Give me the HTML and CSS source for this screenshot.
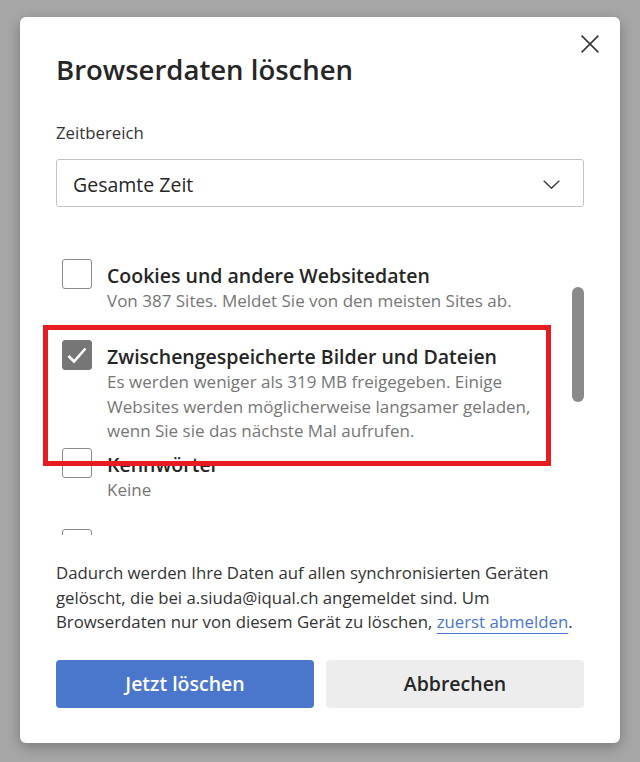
FILE: index.html
```html
<!DOCTYPE html>
<html lang="de">
<head>
<meta charset="utf-8">
<title>Browserdaten löschen</title>
<link rel="stylesheet" href="styles.css">
</head>
<body>
<div class="dialog">
  <div class="header">
    <h1 class="title">Browserdaten löschen</h1>
    <button class="close" aria-label="Schließen">
      <svg width="18" height="18" viewBox="0 0 18 18"><path d="M0.6 0.6 L17.4 17.4 M17.4 0.6 L0.6 17.4" stroke="#333" stroke-width="1.5" fill="none"/></svg>
    </button>
  </div>

  <div class="field-label">Zeitbereich</div>
  <div class="select">
    <span class="select-value">Gesamte Zeit</span>
    <svg class="chevron" width="17" height="9" viewBox="0 0 17 9"><path d="M0.7 0.7 L8.5 8.2 L16.3 0.7" stroke="#333" stroke-width="1.3" fill="none"/></svg>
  </div>

  <div class="scroll-area">
    <div class="list">
      <div class="item">
        <span class="checkbox"></span>
        <div class="item-text">
          <div class="item-title">Cookies und andere Websitedaten</div>
          <div class="item-desc">Von 387 Sites. Meldet Sie von den meisten Sites ab.</div>
        </div>
      </div>
      <div class="item item-tall">
        <span class="checkbox checked">
          <svg width="30" height="30" viewBox="0 0 30 30"><path d="M6.5 16 L12 21.5 L23.5 8.5" stroke="#fff" stroke-width="2.6" fill="none"/></svg>
        </span>
        <div class="item-text">
          <div class="item-title">Zwischengespeicherte Bilder und Dateien</div>
          <div class="item-desc">Es werden weniger als 319 MB freigegeben. Einige<br>Websites werden möglicherweise langsamer geladen,<br>wenn Sie sie das nächste Mal aufrufen.</div>
        </div>
      </div>
      <div class="item">
        <span class="checkbox"></span>
        <div class="item-text">
          <div class="item-title">Kennwörter</div>
          <div class="item-desc">Keine</div>
        </div>
      </div>
      <div class="item">
        <span class="checkbox"></span>
      </div>
    </div>
    <div class="track"><div class="thumb"></div></div>
    <div class="highlight"></div>
  </div>

  <p class="note">Dadurch werden Ihre Daten auf allen synchronisierten Geräten<br>gelöscht, die bei a.siuda@iqual.ch angemeldet sind. Um<br>Browserdaten nur von diesem Gerät zu löschen, <a class="link" href="#">zuerst abmelden</a>.</p>

  <div class="actions">
    <button class="btn btn-primary">Jetzt löschen</button>
    <button class="btn btn-secondary">Abbrechen</button>
  </div>
</div>
</body>
</html>
```

FILE: styles.css
```css
html, body {
  margin: 0;
  padding: 0;
}

body {
  background: #a7a7a7;
  height: 762px;
  padding: 17px 20px 0;
  box-sizing: border-box;
  font-family: "Open Sans", "Noto Sans", sans-serif;
  color: #262626;
  overflow: hidden;
}

.dialog {
  width: 600px;
  box-sizing: border-box;
  background: #fff;
  border-radius: 6px;
  padding: 18px 36px 35px;
  box-shadow: 0 4px 14px rgba(0, 0, 0, 0.28);
}

.header {
  display: flex;
  justify-content: space-between;
  align-items: flex-start;
}

.title {
  margin: 17px 0 0;
  font-size: 27.5px;
  line-height: 36px;
  font-weight: 600;
  color: #262626;
}

.close {
  width: 18px;
  height: 18px;
  padding: 0;
  margin: 0 -15px 0 0;
  border: 0;
  background: none;
  display: block;
}

.close svg {
  display: block;
}

.field-label {
  margin-top: 34px;
  font-size: 16.8px;
  line-height: 22px;
  color: #333;
}

.select {
  margin-top: 15px;
  height: 48px;
  box-sizing: border-box;
  border: 1px solid #c4c4c4;
  border-radius: 3px;
  padding: 3px 23px 0 16px;
  display: flex;
  align-items: center;
  justify-content: space-between;
}

.select-value {
  font-size: 19.5px;
  line-height: 26px;
  color: #262626;
}

.chevron {
  display: block;
}

.scroll-area {
  margin-top: 24px;
  height: 304px;
  display: flex;
  position: relative;
}

.list {
  flex: 1;
  overflow: hidden;
  padding-top: 28px;
}

.item {
  height: 81px;
  display: flex;
  align-items: flex-start;
}

.item-tall {
  height: 108px;
}

.checkbox {
  flex: none;
  width: 30px;
  height: 30px;
  box-sizing: border-box;
  margin-left: 6px;
  border: 1px solid #8a8a8a;
  border-radius: 3px;
  background: #fff;
}

.checkbox svg {
  display: block;
  margin: -1px;
}

.checkbox.checked {
  background: #767676;
  border-color: #767676;
}

.item-text {
  margin: 4px 0 0 15px;
}

.item-title {
  font-size: 19.5px;
  line-height: 26px;
  font-weight: 600;
  color: #262626;
  white-space: nowrap;
}

.item-desc {
  font-size: 17px;
  line-height: 24.5px;
  color: #767676;
  white-space: nowrap;
}

.highlight {
  position: absolute;
  left: -13px;
  top: 94px;
  width: 508px;
  height: 141px;
  box-sizing: border-box;
  border: 5px solid #e71c22;
  pointer-events: none;
}

.track {
  width: 12px;
  flex: none;
}

.thumb {
  margin-top: 56px;
  height: 115px;
  border-radius: 6px;
  background: #8a8a8a;
}

.note {
  margin: 26px 0 0;
  font-size: 16.8px;
  line-height: 24.5px;
  color: #333;
  white-space: nowrap;
}

.link {
  color: #4a76cc;
  text-decoration: underline;
  text-underline-offset: 5px;
  text-decoration-thickness: 1px;
}

.actions {
  margin-top: 25px;
  display: grid;
  grid-template-columns: 1fr 1fr;
  gap: 12px;
}

.btn {
  height: 48px;
  border: 0;
  border-radius: 4px;
  font-family: "Open Sans", "Noto Sans", sans-serif;
  font-size: 19.5px;
  font-weight: 600;
  padding: 0;
}

.btn-primary {
  background: #4a76cc;
  color: #fff;
}

.btn-secondary {
  background: #ededed;
  color: #262626;
}
```
